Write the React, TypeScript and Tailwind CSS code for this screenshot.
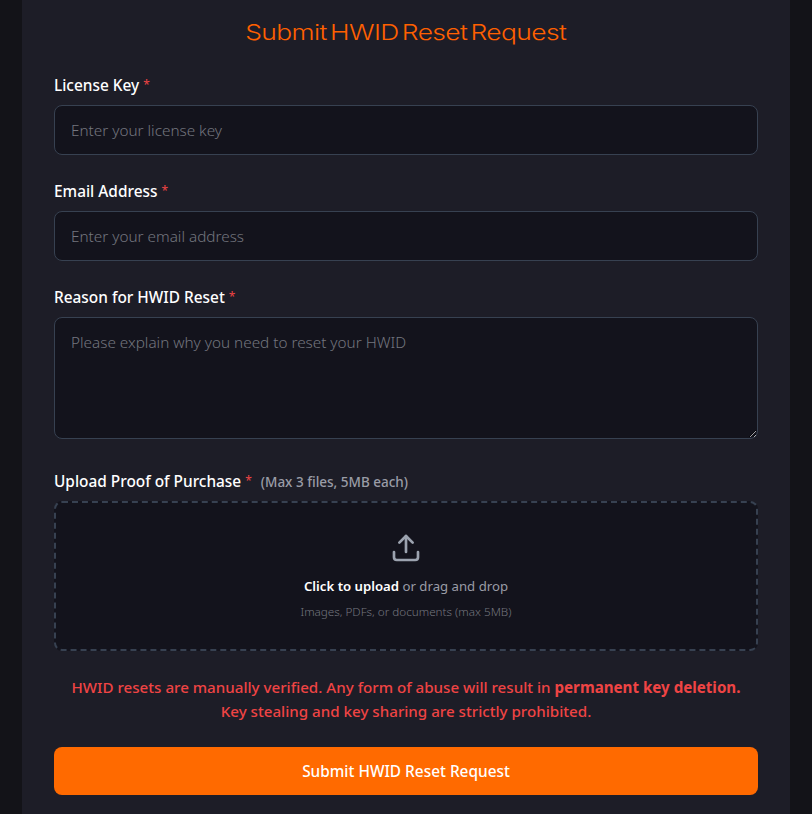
import { Upload } from "lucide-react";

const font = { fontFamily: '"Noto Sans", sans-serif' };

const inputCls =
  "block h-[50px] w-full rounded-lg border border-[#374151] bg-[#13131c] px-4 text-[15.3px] font-light text-white placeholder:text-[#73767f] outline-none";

function Label({ children, hint }: { children: string; hint?: string }) {
  return (
    <label className="mb-2 block h-6 text-[15.4px] font-medium leading-6 text-white">
      {children}
      <span className="ml-1 align-[2px] text-[12px] font-normal text-[#ef4444]">*</span>
      {hint && (
        <span className="ml-[9px] text-[13.5px] font-medium text-[#9a9ca6]">{hint}</span>
      )}
    </label>
  );
}

export default function App() {
  return (
    <div className="h-[814px] overflow-hidden bg-[#131318]" style={font}>
      <div className="mx-[22px] h-full bg-[#1d1d27] px-8 pt-4">
        <h2 className="mb-[25px] h-8 text-center text-[22px] font-light leading-8 text-[#ff6000] [font-family:Inter,sans-serif]">
          <span className="inline-block scale-x-[1.2] tracking-[-0.5px] [word-spacing:-3px]">Submit HWID Reset Request</span>
        </h2>

        <Label>License Key</Label>
        <input className={inputCls} placeholder="Enter your license key" />

        <div className="mt-6">
          <Label>Email Address</Label>
          <input className={inputCls} placeholder="Enter your email address" />
        </div>

        <div className="mt-6">
          <Label>Reason for HWID Reset</Label>
          <textarea
            className="h-[122px] w-full rounded-lg border border-[#374151] bg-[#13131c] px-4 pt-[13px] text-[15.3px] font-light text-white placeholder:text-[#73767f] outline-none"
            placeholder="Please explain why you need to reset your HWID"
          />
        </div>

        <div className="mt-6">
          <Label hint="(Max 3 files, 5MB each)">Upload Proof of Purchase</Label>
          <div className="flex h-[150px] flex-col items-center justify-center rounded-lg border-2 border-dashed border-[#374151] bg-[#13131c] pb-[2px]">
            <Upload className="mb-3 h-8 w-8 text-[#9ca3af]" strokeWidth={2} />
            <p className="text-[13.2px] leading-5 text-[#9a9ca6]">
              <span className="font-semibold text-white">Click to upload</span> or drag and drop
            </p>
            <p className="mt-[7px] text-[11.7px] font-light leading-4 text-[#73767f]">
              Images, PDFs, or documents (max 5MB)
            </p>
          </div>
        </div>

        <p className="mt-6 text-center text-[15.15px] font-medium leading-6 text-[#ef4444]">
          HWID resets are manually verified. Any form of abuse will result in{" "}
          <span className="font-bold">permanent key deletion.</span>
          <br />
          Key stealing and key sharing are strictly prohibited.
        </p>

        <button
          type="button"
          className="mt-6 block h-12 w-full rounded-lg bg-[#ff6a00] pt-0.5 text-[15.4px] font-medium text-white"
        >
          Submit HWID Reset Request
        </button>
      </div>
    </div>
  );
}
